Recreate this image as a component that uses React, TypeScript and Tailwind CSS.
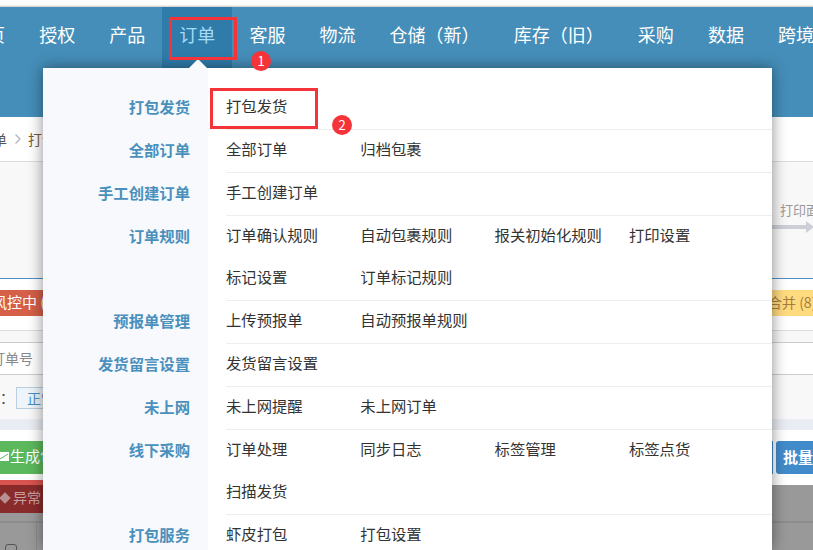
const nav = ["首页", "授权", "产品", "订单", "客服", "物流", "仓储（新）", "库存（旧）", "采购", "数据", "跨境"];

const groups: { label: string; rows: string[][] }[] = [
  { label: "打包发货", rows: [["打包发货"]] },
  { label: "全部订单", rows: [["全部订单", "归档包裹"]] },
  { label: "手工创建订单", rows: [["手工创建订单"]] },
  { label: "订单规则", rows: [["订单确认规则", "自动包裹规则", "报关初始化规则", "打印设置"], ["标记设置", "订单标记规则"]] },
  { label: "预报单管理", rows: [["上传预报单", "自动预报单规则"]] },
  { label: "发货留言设置", rows: [["发货留言设置"]] },
  { label: "未上网", rows: [["未上网提醒", "未上网订单"]] },
  { label: "线下采购", rows: [["订单处理", "同步日志", "标签管理", "标签点货"], ["扫描发货"]] },
  { label: "打包服务", rows: [["虾皮打包", "打包设置"]] },
];

function Badge({ n, className }: { n: number; className: string }) {
  return (
    <div className={"absolute w-5 h-5 rounded-full bg-[#f5343a] text-white text-[13px] leading-5 text-center " + className}>{n}</div>
  );
}

function Background() {
  return (
    <div className="flex flex-col h-[550px] overflow-hidden">
      <div className="h-[7px] shrink-0 bg-white border-b border-[#d5d5d5] shadow-[inset_0_-1px_0_#f0f0f0]" />

      <div className="h-[110px] bg-[#458eb9] flex items-start overflow-hidden shrink-0">
        <div className="flex -ml-[48px] shrink-0">
          {nav.map((item) => (
            <div
              key={item}
              className={
                item === "订单"
                  ? "h-[61px] px-[17.050px] pb-[6px] flex items-center text-[18px] whitespace-nowrap bg-[#2f7cab] text-[#a5dcf7] shrink-0"
                  : "h-[61px] px-[17.050px] pb-[6px] flex items-center text-[18px] whitespace-nowrap text-white shrink-0"
              }
            >
              {item}
            </div>
          ))}
        </div>
      </div>

      <div className="h-[45px] bg-white border-b border-[#ddd] flex items-center text-[14px] text-[#555] shrink-0 overflow-hidden">
        <span className="-ml-[7px]">单</span>
        <svg width="8" height="12" viewBox="0 0 8 12" className="ml-[7px]">
          <path d="M1.5 1.5 6 6 1.5 10.500" fill="none" stroke="#a9b4bd" strokeWidth="1.200" />
        </svg>
        <span className="ml-[6px] text-[#7a5a3a]">打包发货</span>
      </div>

      <div className="h-[117px] bg-[#f8f8f8] border-b border-[#4a90c8] flex justify-end shrink-0 overflow-hidden">
        <div className="w-[41px] pt-[39px] overflow-hidden">
          <div className="text-[13px] leading-[18px] text-[#999] whitespace-nowrap pl-[8px]">打印面单</div>
          <svg width="41" height="14" viewBox="0 0 41 14" className="mt-[1px]">
            <path d="M0 5h34V1l8 6-8 6V9H0z" fill="#ccd0d6" />
          </svg>
        </div>
      </div>

      <div className="h-[52px] bg-white border-b border-[#ddd] pt-[11px] flex justify-between shrink-0 overflow-hidden">
        <div className="w-[43px] h-[26px] bg-[#d55f47] text-white text-[15px] leading-[24px] whitespace-nowrap overflow-hidden">
          <span className="-ml-[8px] inline-block">风控中 (0)</span>
        </div>
        <div className="w-[41px] h-[26px] bg-[#ffdb80] text-[#a97c3d] text-[14px] leading-[24px] whitespace-nowrap overflow-hidden">
          <span className="-ml-[4px] inline-block">合并 (8)</span>
        </div>
      </div>

      <div className="h-[12px] bg-[#f8f8f8] border-b border-[#ccc] shrink-0" />

      <div className="h-[32px] bg-white border-b border-[#ccc] text-[14px] leading-[31px] text-[#888] whitespace-nowrap overflow-hidden shrink-0">
        <span className="-ml-[9px] inline-block">订单号</span>
      </div>

      <div className="h-[44px] bg-[#f8f8f8] flex items-start pt-[12px] text-[14px] shrink-0 overflow-hidden">
        <span className="text-[#444] w-[16px] shrink-0">：</span>
        <span className="h-[22px] pl-[10px] pr-2 bg-[#edf4fa] border border-[#b9cfdf] text-[#4a90c8] leading-[20px] whitespace-nowrap">正常</span>
      </div>

      <div className="h-[11px] bg-[#e9edf3] shrink-0" />

      <div className="h-[50px] bg-white pt-[11px] flex justify-between text-[15px] shrink-0 overflow-hidden">
        <div className="w-[43px] h-[33px] pb-[3px] bg-[#5cb85c] text-white flex items-center whitespace-nowrap overflow-hidden">
          <svg width="9" height="9" viewBox="0 0 9 9" className="shrink-0">
            <rect width="9" height="9" fill="#fff" />
            <path d="M0 7 8 2" fill="none" stroke="#5cb85c" />
          </svg>
          <span className="ml-[1px]">生成包裹</span>
        </div>
        <div className="flex">
          <div className="w-[1px] h-[33px] bg-[#428bca]" />
          <div className="w-[37px] h-[33px] ml-[3px] bg-[#428bca] rounded-l-[3px] text-white font-bold leading-[31px] pl-[7px] whitespace-nowrap overflow-hidden">批量操作</div>
        </div>
      </div>

      <div className="h-[5px] bg-[#d9534f] w-[43px] shrink-0" />

      <div className="flex-1 min-h-0 overflow-hidden bg-[#999] flex flex-col">
        <div className="h-[28px] w-[43px] pb-[3px] bg-[#8a2b2b] text-[#c9a0a0] text-[14px] flex items-center whitespace-nowrap overflow-hidden shrink-0">
          <span className="w-[8px] h-[8px] ml-[1px] mr-[4px] bg-[#b89090] rotate-45 shrink-0" />
          <span>异常</span>
        </div>
        <div className="h-[10px] border-b-2 border-[#8c8c8c] shrink-0" />
        <div className="flex-1 min-h-0">
          <div className="w-[37px] h-full border-r border-[#8c8c8c] pt-[21px] pl-[5px]">
            <div className="w-[12px] h-[12px] border border-[#555] rounded-[3px]" />
          </div>
        </div>
      </div>
    </div>
  );
}

export default function App() {
  return (
    <div className="relative w-[813px] h-[550px] overflow-hidden bg-white" style={{ fontFamily: '"Noto Sans CJK SC", "Noto Sans", sans-serif' }}>
      <Background />

      {/* dropdown from the 订单 tab */}
      <div className="absolute left-[43px] top-[68px] w-[729px] h-[482px] bg-white flex shadow-[0_0_14px_rgba(0,0,0,0.45)]">
        <div className="w-[165px] bg-[#f7f9fc] pt-[19px] shrink-0">
          {groups.map((g) => (
            <div key={g.label} className="pr-[18px] text-right text-[15.330px] font-bold leading-[38px] text-[#4a90bd]" style={{ height: g.rows.length * 42 + 1 }}>
              {g.label}
            </div>
          ))}
        </div>
        <div className="flex-1 pt-[19px] pl-[18px] min-w-0">
          {groups.map((g) => (
            <div key={g.label} className="border-b border-[#eee]">
              {g.rows.map((row) => (
                <div key={row[0]} className="h-[42px] pb-[6px] flex items-center text-[15.330px] text-[#333]">
                  {row.map((link) => (
                    <div key={link} className="w-[134.300px] whitespace-nowrap">{link}</div>
                  ))}
                </div>
              ))}
            </div>
          ))}
        </div>
      </div>

      {/* caret on the panel */}
      <div className="absolute left-[189px] top-[59px] w-0 h-0 border-x-[9px] border-x-transparent border-b-[9px] border-b-[#f7f9fc]" />

      {/* annotations */}
      <div className="absolute left-[169px] top-[17px] w-[68px] h-[43px] border-[3px] border-[#f5343a]" />
      <div className="absolute left-[210px] top-[88px] w-[108px] h-[41px] border-[3px] border-[#f5343a]" />
      <Badge n={1} className="left-[251px] top-[51px]" />
      <Badge n={2} className="left-[332px] top-[115px]" />
    </div>
  );
}
